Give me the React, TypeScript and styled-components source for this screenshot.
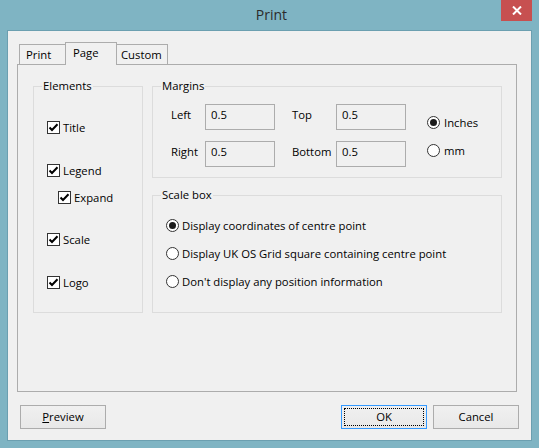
import React from "react";
import styled, { createGlobalStyle } from "styled-components";

const GlobalStyle = createGlobalStyle`
  html, body { margin: 0; padding: 0; background: #7fb4c3; }
  body { font-family: "Open Sans", "Noto Sans", sans-serif; font-size: 11.3px; color: #000; }
  * { box-sizing: border-box; }
`;

const Frame = styled.div`
  width: 539px;
  height: 448px;
  background: #7fb4c3;
  padding: 0 7px 7px 7px;
  display: flex;
  flex-direction: column;
`;

const TitleBar = styled.div`
  height: 30px;
  display: grid;
  grid-template-columns: 1fr auto 1fr;
  align-items: start;
`;

const TitleText = styled.div`
  grid-column: 2;
  height: 30px;
  line-height: 30px;
  font-size: 14px;
  color: #2b2b2b;
  padding-left: 4px;
`;

const CloseButton = styled.div`
  grid-column: 3;
  justify-self: end;
  width: 31px;
  height: 21px;
  background: #c75050;
  display: flex;
  align-items: center;
  justify-content: center;
`;

const Client = styled.div`
  flex: 1;
  background: #f0f0f0;
  border: 1px solid #6b9fb0;
  display: flex;
  flex-direction: column;
  padding: 11px 11px 11px 9px;
`;

const TabStrip = styled.div`
  display: flex;
  align-items: flex-end;
  height: 23px;
  margin-left: 2px;
  margin-bottom: -1px;
`;

const Tab = styled.div<{ $active?: boolean; $w: number; $pad: number }>`
  position: relative;
  width: ${(p) => p.$w}px;
  height: ${(p) => (p.$active ? 23 : 20)}px;
  margin-bottom: ${(p) => (p.$active ? 0 : 1)}px;
  margin-left: -1px;
  &:first-child { margin-left: 0; }
  padding-left: ${(p) => p.$pad}px;
  padding-bottom: ${(p) => (p.$active ? 3 : 0)}px;
  border: 1px solid #acacac;
  border-bottom: none;
  background: #f0f0f0;
  z-index: ${(p) => (p.$active ? 2 : 1)};
  display: flex;
  align-items: center;
`;

const Panel = styled.div`
  width: 500px;
  height: 328px;
  border: 1px solid #acacac;
  background: #f0f0f0;
  display: flex;
  align-items: flex-start;
  gap: 9px;
  padding: 21px 14px 0 15px;
`;

const Group = styled.div<{ $w: number; $h: number }>`
  position: relative;
  width: ${(p) => p.$w}px;
  height: ${(p) => p.$h}px;
  border: 1px solid #dcdcdc;
`;

const Caption = styled.span`
  position: absolute;
  top: -8px;
  left: 8px;
  padding: 0 1px;
  line-height: 14px;
  background: #f0f0f0;
`;

const RightColumn = styled.div`
  display: flex;
  flex-direction: column;
  gap: 17px;
`;

const CheckList = styled.div`
  display: flex;
  flex-direction: column;
  padding-left: 13px;
`;

const CheckRow = styled.div<{ $top: number; $indent?: number }>`
  display: flex;
  align-items: center;
  gap: 3px;
  height: 13px;
  margin-top: ${(p) => p.$top}px;
  margin-left: ${(p) => p.$indent ?? 0}px;
`;

const Box = styled.span`
  width: 13px;
  height: 13px;
  border: 1px solid #333;
  background: #fff;
  display: flex;
  align-items: center;
  justify-content: center;
  flex: none;
`;

const MarginsBody = styled.div`
  display: flex;
  align-items: flex-start;
  padding: 17px 0 0 18px;
`;

const FieldGrid = styled.div`
  display: grid;
  grid-template-columns: 34px 70px 61px 70px;
  grid-template-rows: 26px 26px;
  row-gap: 11px;
`;

const FieldLabel = styled.div<{ $pad?: number }>`
  display: flex;
  align-items: center;
  padding-left: ${(p) => p.$pad ?? 0}px;
  padding-bottom: 5px;
`;

const TextBox = styled.input`
  width: 70px;
  height: 26px;
  border: 1px solid #acacac;
  background: #f0f0f0;
  font: inherit;
  color: #000;
  padding: 0 5px 5px 5px;
  margin: 0;
  outline: none;
`;

const RadioColumn = styled.div<{ $top: number; $left: number; $gap: number }>`
  display: flex;
  flex-direction: column;
  gap: ${(p) => p.$gap}px;
  padding-top: ${(p) => p.$top}px;
  padding-left: ${(p) => p.$left}px;
`;

const RadioRow = styled.div<{ $gap?: number }>`
  display: flex;
  align-items: center;
  gap: ${(p) => p.$gap ?? 3}px;
  height: 17px;
`;

const Circle = styled.span<{ $on?: boolean }>`
  width: 13px;
  height: 13px;
  border-radius: 50%;
  border: 1px solid #333;
  background: #fff;
  display: flex;
  align-items: center;
  justify-content: center;
  flex: none;
  &::after {
    content: "";
    width: 7px;
    height: 7px;
    border-radius: 50%;
    background: ${(p) => (p.$on ? "#1a1a1a" : "transparent")};
  }
`;

const ButtonRow = styled.div`
  display: flex;
  align-items: center;
  gap: 6px;
  margin-top: 13px;
  padding: 0 1px 0 3px;
`;

const Spacer = styled.div`
  flex: 1;
`;

const Button = styled.div<{ $default?: boolean }>`
  position: relative;
  width: 86px;
  height: 24px;
  border: 1px solid ${(p) => (p.$default ? "#3399ff" : "#acacac")};
  background: linear-gradient(#f0f0f0, #e8e8e8);
  display: flex;
  align-items: center;
  justify-content: center;
  padding-bottom: 1px;
  &::after {
    content: "";
    display: ${(p) => (p.$default ? "block" : "none")};
    position: absolute;
    inset: 2px;
    border: 1px dotted #000;
  }
`;

const Check = () => (
  <svg width="11" height="11" viewBox="0 0 11 11">
    <path d="M1.5 5.5 L4 8 L9.5 2.3" fill="none" stroke="#000" strokeWidth="2" />
  </svg>
);

const CheckItem = ({ label, top, indent }: { label: string; top: number; indent?: number }) => (
  <CheckRow $top={top} $indent={indent}>
    <Box>
      <Check />
    </Box>
    <span>{label}</span>
  </CheckRow>
);

const Radio = ({ label, on, gap }: { label: string; on?: boolean; gap?: number }) => (
  <RadioRow $gap={gap}>
    <Circle $on={on} />
    <span>{label}</span>
  </RadioRow>
);

export default function App() {
  return (
    <>
      <GlobalStyle />
      <Frame>
        <TitleBar>
          <TitleText>Print</TitleText>
          <CloseButton>
            <svg width="10" height="9" viewBox="0 0 10 9">
              <path d="M1 0.5 L9 8.5 M9 0.5 L1 8.5" stroke="#fff" strokeWidth="2" />
            </svg>
          </CloseButton>
        </TitleBar>
        <Client>
          <TabStrip>
            <Tab $w={47} $pad={6}>Print</Tab>
            <Tab $w={52} $pad={7} $active>Page</Tab>
            <Tab $w={52} $pad={4}>Custom</Tab>
          </TabStrip>
          <Panel>
            <Group $w={110} $h={227}>
              <Caption>Elements</Caption>
              <CheckList>
                <CheckItem label="Title" top={34} />
                <CheckItem label="Legend" top={30} />
                <CheckItem label="Expand" top={14} indent={11} />
                <CheckItem label="Scale" top={29} />
                <CheckItem label="Logo" top={30} />
              </CheckList>
            </Group>
            <RightColumn>
              <Group $w={350} $h={92}>
                <Caption>Margins</Caption>
                <MarginsBody>
                  <FieldGrid>
                    <FieldLabel>Left</FieldLabel>
                    <TextBox readOnly value="0.5" />
                    <FieldLabel $pad={17}>Top</FieldLabel>
                    <TextBox readOnly value="0.5" />
                    <FieldLabel>Right</FieldLabel>
                    <TextBox readOnly value="0.5" />
                    <FieldLabel $pad={17}>Bottom</FieldLabel>
                    <TextBox readOnly value="0.5" />
                  </FieldGrid>
                  <RadioColumn $top={10} $left={21} $gap={11}>
                    <Radio label="Inches" on gap={4} />
                    <Radio label="mm" gap={4} />
                  </RadioColumn>
                </MarginsBody>
              </Group>
              <Group $w={350} $h={118}>
                <Caption>Scale box</Caption>
                <RadioColumn $top={21} $left={13} $gap={11}>
                  <Radio label="Display coordinates of centre point" on />
                  <Radio label="Display UK OS Grid square containing centre point" />
                  <Radio label="Don't display any position information" />
                </RadioColumn>
              </Group>
            </RightColumn>
          </Panel>
          <ButtonRow>
            <Button>
              <span>
                <u>P</u>review
              </span>
            </Button>
            <Spacer />
            <Button $default>OK</Button>
            <Button>Cancel</Button>
          </ButtonRow>
        </Client>
      </Frame>
    </>
  );
}
